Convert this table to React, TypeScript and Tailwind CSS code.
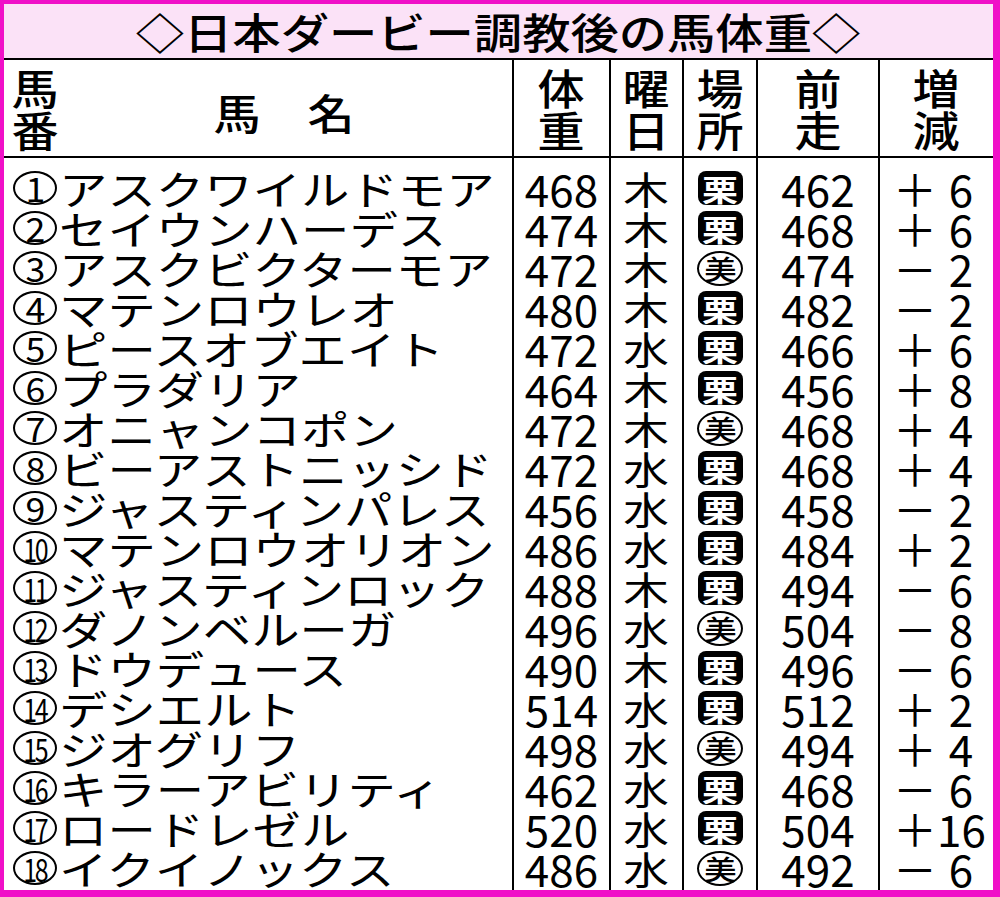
const rows: [number, string, number, string, '栗' | '美', number, string, string][] = [
  [1, 'アスクワイルドモア', 468, '木', '栗', 462, '＋', '6'],
  [2, 'セイウンハーデス', 474, '木', '栗', 468, '＋', '6'],
  [3, 'アスクビクターモア', 472, '木', '美', 474, '－', '2'],
  [4, 'マテンロウレオ', 480, '木', '栗', 482, '－', '2'],
  [5, 'ピースオブエイト', 472, '水', '栗', 466, '＋', '6'],
  [6, 'プラダリア', 464, '木', '栗', 456, '＋', '8'],
  [7, 'オニャンコポン', 472, '木', '美', 468, '＋', '4'],
  [8, 'ビーアストニッシド', 472, '水', '栗', 468, '＋', '4'],
  [9, 'ジャスティンパレス', 456, '水', '栗', 458, '－', '2'],
  [10, 'マテンロウオリオン', 486, '水', '栗', 484, '＋', '2'],
  [11, 'ジャスティンロック', 488, '木', '栗', 494, '－', '6'],
  [12, 'ダノンベルーガ', 496, '水', '美', 504, '－', '8'],
  [13, 'ドウデュース', 490, '木', '栗', 496, '－', '6'],
  [14, 'デシエルト', 514, '水', '栗', 512, '＋', '2'],
  [15, 'ジオグリフ', 498, '水', '美', 494, '＋', '4'],
  [16, 'キラーアビリティ', 462, '水', '栗', 468, '－', '6'],
  [17, 'ロードレゼル', 520, '水', '栗', 504, '＋', '16'],
  [18, 'イクイノックス', 486, '水', '美', 492, '－', '6'],
];

const font = { fontFamily: '"Noto Sans CJK JP", "Noto Sans", sans-serif' };

function Stack({ a, b }: { a: string; b: string }) {
  return (
    <div className="flex flex-col items-center text-[42px] leading-[40px] font-medium">
      <span className="scale-x-[1.12]">{a}</span>
      <span className="mt-[2px] scale-x-[1.12]">{b}</span>
    </div>
  );
}

function Circled({ n }: { n: number }) {
  return (
    <div className="w-[44px] h-[34px] shrink-0 rounded-[50%] border-[2px] border-black flex items-center justify-center">
      {n < 10 ? (
        <span className="text-[34px] leading-[30px] scale-x-[1.05]">{n}</span>
      ) : (
        <span className="text-[32px] leading-[30px] tracking-[-3px] scale-x-[0.78]">{n}</span>
      )}
    </div>
  );
}

function Place({ p }: { p: '栗' | '美' }) {
  if (p === '栗') {
    return (
      <div className="w-[45px] h-[34px] rounded-[8px] bg-black text-white flex items-center justify-center">
        <span className="text-[30px] leading-none font-bold scale-x-[1.2]">栗</span>
      </div>
    );
  }
  return (
    <div className="w-[46px] h-[35px] rounded-[50%] border-[2px] border-black text-black flex items-center justify-center">
      <span className="text-[27px] leading-none font-medium scale-x-[1.2]">美</span>
    </div>
  );
}

export default function App() {
  return (
    <div className="w-[1000px] h-[897px] bg-[#f010c8] pt-[4px] pl-[4px] pr-[7px] pb-[7px]" style={font}>
      <div className="w-full h-full bg-white flex flex-col text-black">
        {/* title */}
        <div className="h-[56px] bg-[#fbe2f7] border-b-2 border-black flex items-center justify-center">
          <span className="inline-block text-[42px] leading-none font-medium whitespace-nowrap scale-x-[1.15]">◇日本ダービー調教後の馬体重◇</span>
        </div>

        <div className="flex flex-1">
          {/* name column */}
          <div className="w-[508px] flex flex-col">
            <div className="h-[98px] border-b-2 border-black flex items-center pl-[10px]">
              <Stack a="馬" b="番" />
              <div className="flex-1 flex justify-center pt-[8px]">
                <span className="text-[42px] leading-none font-medium scale-x-[1.12]">馬　名</span>
              </div>
            </div>
            <div className="pt-[10px] pl-[9px]">
              {rows.map((r) => (
                <div key={r[0]} className="h-[40px] flex items-center">
                  <Circled n={r[0]} />
                  <span className="ml-[2px] text-[40px] leading-[40px] whitespace-nowrap origin-left scale-x-[1.21]">{r[1]}</span>
                </div>
              ))}
            </div>
          </div>

          {/* 体重 */}
          <div className="w-[97px] border-l-2 border-black flex flex-col">
            <div className="h-[98px] border-b-2 border-black flex items-center justify-center">
              <Stack a="体" b="重" />
            </div>
            <div className="pt-[10px]">
              {rows.map((r) => (
                <div key={r[0]} className="h-[40px] text-[44px] leading-[40px] text-center">{r[2]}</div>
              ))}
            </div>
          </div>

          {/* 曜日 */}
          <div className="w-[73px] border-l-2 border-black flex flex-col">
            <div className="h-[98px] border-b-2 border-black flex items-center justify-center">
              <Stack a="曜" b="日" />
            </div>
            <div className="pt-[10px]">
              {rows.map((r) => (
                <div key={r[0]} className="h-[40px] flex items-center justify-center">
                  <span className="text-[38px] leading-[40px] scale-x-[1.2]">{r[3]}</span>
                </div>
              ))}
            </div>
          </div>

          {/* 場所 */}
          <div className="w-[74px] border-l-2 border-black flex flex-col">
            <div className="h-[98px] border-b-2 border-black flex items-center justify-center">
              <Stack a="場" b="所" />
            </div>
            <div className="pt-[10px]">
              {rows.map((r) => (
                <div key={r[0]} className="h-[40px] flex items-center justify-center">
                  <Place p={r[4]} />
                </div>
              ))}
            </div>
          </div>

          {/* 前走 */}
          <div className="w-[122px] border-l-2 border-black flex flex-col">
            <div className="h-[98px] border-b-2 border-black flex items-center justify-center">
              <Stack a="前" b="走" />
            </div>
            <div className="pt-[10px]">
              {rows.map((r) => (
                <div key={r[0]} className="h-[40px] text-[44px] leading-[40px] text-center">{r[5]}</div>
              ))}
            </div>
          </div>

          {/* 増減 */}
          <div className="w-[115px] border-l-2 border-black flex flex-col">
            <div className="h-[98px] border-b-2 border-black flex items-center justify-center">
              <Stack a="増" b="減" />
            </div>
            <div className="pt-[10px] pl-[13px]">
              {rows.map((r) => (
                <div key={r[0]} className="h-[40px] flex text-[44px] leading-[40px]">
                  <span className="w-[44px] text-center">{r[6]}</span>
                  <span className="w-[48px] text-center">{r[7]}</span>
                </div>
              ))}
            </div>
          </div>
        </div>
      </div>
    </div>
  );
}
